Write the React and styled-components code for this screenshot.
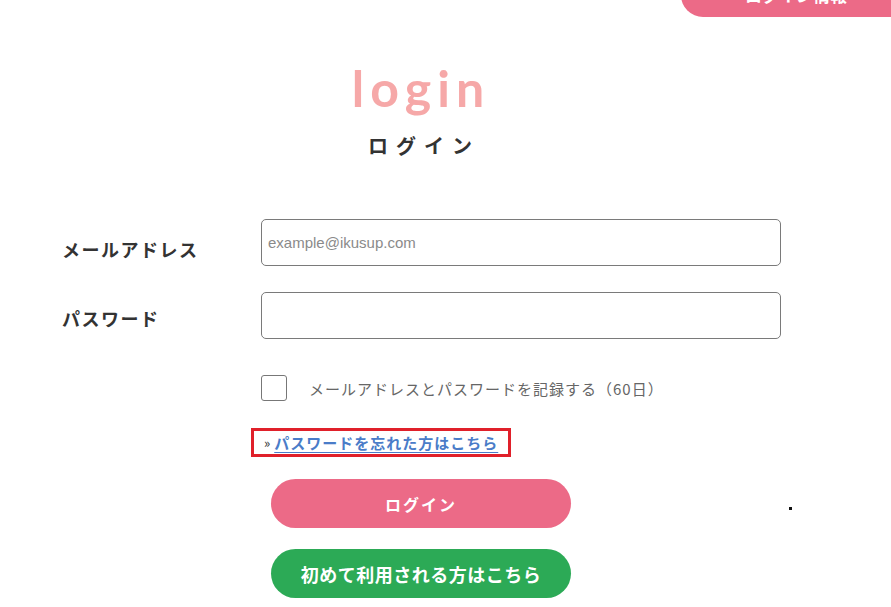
import React from "react";
import styled, { createGlobalStyle } from "styled-components";

const Global = createGlobalStyle`
  html, body { margin: 0; padding: 0; background: #fff; }
  body { font-family: "Noto Sans CJK JP", "Noto Sans", sans-serif; color: #333; overflow: hidden; }
  * { box-sizing: border-box; }
`;

const Header = styled.header`
  height: 17px;
  display: flex;
  justify-content: flex-end;
  overflow: hidden;
`;

const HeaderButton = styled.a`
  width: 230px;
  height: 50px;
  margin-top: -33px;
  margin-right: -20px;
  flex-shrink: 0;
  background: #ec6a87;
  border-radius: 22px;
  color: #fff;
  font-weight: 700;
  font-size: 17px;
  display: flex;
  align-items: flex-end;
  justify-content: center;
  padding-bottom: 14px;
  text-decoration: none;
  line-height: 1;
`;

const Main = styled.main`
  width: 760px;
  margin-left: 40px;
  display: flex;
  flex-direction: column;
  position: relative;
`;

const TitleBlock = styled.div`
  display: flex;
  flex-direction: column;
  align-items: center;
  margin-top: 46px;
`;

const EnTitle = styled.div`
  font-family: "Lato", sans-serif;
  font-weight: 700;
  font-size: 50px;
  letter-spacing: 6px;
  line-height: 1;
  color: #f6a8a8;
  padding-left: 2px;
`;

const JaTitle = styled.h1`
  margin: 23px 0 0;
  font-size: 20px;
  font-weight: 700;
  letter-spacing: 8px;
  line-height: 1;
  color: #333;
  padding-left: 8px;
`;

const Form = styled.form`
  display: flex;
  flex-direction: column;
  margin-top: 63px;
  padding-left: 22px;
`;

const Row = styled.div`
  display: grid;
  grid-template-columns: 199px 520px;
  align-items: center;
  margin-bottom: ${(p) => p.$gap || 0}px;
`;

const Label = styled.label`
  font-size: 18px;
  font-weight: 700;
  color: #333;
  letter-spacing: 1.5px;
  padding-top: ${(p) => p.$offset || 0}px;
`;

const Input = styled.input`
  width: 520px;
  height: 47px;
  border: 1px solid #7a7a7a;
  border-radius: 5px;
  padding: 0 6px;
  font-family: "Liberation Sans", Arial, sans-serif;
  font-size: 15px;
  color: #333;
  outline: none;
  &::placeholder { color: #8a8a8a; }
`;

const Options = styled.div`
  display: flex;
  flex-direction: column;
  margin-left: 199px;
`;

const CheckRow = styled.label`
  display: flex;
  align-items: center;
  margin-top: 36px;
  gap: 22px;
`;

const CheckBox = styled.span`
  width: 26px;
  height: 26px;
  border: 1px solid #777;
  border-radius: 3px;
  background: #fff;
`;

const CheckText = styled.span`
  font-size: 15px;
  color: #666;
  letter-spacing: 1px;
`;

const ForgotBox = styled.div`
  align-self: flex-start;
  margin-top: 27px;
  margin-left: -10px;
  width: 260px;
  height: 29px;
  border: 3px solid #e0202a;
  display: flex;
  align-items: center;
  padding-left: 10px;
  font-size: 15px;
  line-height: 1;
`;

const Raquo = styled.span`
  color: #333;
  font-size: 13px;
  margin-right: 4px;
`;

const ForgotLink = styled.a`
  color: #4a7cc8;
  font-weight: 700;
  text-decoration: underline;
  text-underline-offset: 3px;
  letter-spacing: 1px;
`;

const Buttons = styled.div`
  display: flex;
  flex-direction: column;
  align-items: center;
  gap: 21px;
  margin-top: 22px;
  margin-left: 10px;
  width: 300px;
`;

const PillButton = styled.button`
  width: 300px;
  height: 49px;
  border: none;
  border-radius: 25px;
  background: ${(p) => p.$bg};
  color: #fff;
  font-family: "Noto Sans CJK JP", sans-serif;
  font-weight: 700;
  font-size: ${(p) => p.$size}px;
  letter-spacing: ${(p) => p.$ls || 0}px;
  cursor: pointer;
`;

const Speck = styled.span`
  position: absolute;
  left: 749px;
  top: 490px;
  width: 3px;
  height: 3px;
  background: #111;
`;

export default function App() {
  return (
    <>
      <Global />
      <Header>
        <HeaderButton href="#">ログイン情報</HeaderButton>
      </Header>
      <Main>
        <TitleBlock>
          <EnTitle>login</EnTitle>
          <JaTitle>ログイン</JaTitle>
        </TitleBlock>
        <Form onSubmit={(e) => e.preventDefault()}>
          <Row $gap={26}>
            <Label $offset={12}>メールアドレス</Label>
            <Input type="email" placeholder="example@ikusup.com" />
          </Row>
          <Row>
            <Label $offset={4}>パスワード</Label>
            <Input type="password" />
          </Row>
          <Options>
            <CheckRow>
              <CheckBox />
              <CheckText>メールアドレスとパスワードを記録する（60日）</CheckText>
            </CheckRow>
            <ForgotBox>
              <Raquo>»</Raquo>
              <ForgotLink href="#">パスワードを忘れた方はこちら</ForgotLink>
            </ForgotBox>
            <Buttons>
              <PillButton $bg="#ec6a87" $size={16} $ls={2}>ログイン</PillButton>
              <PillButton $bg="#2caa56" $size={18} $ls={0.5}>初めて利用される方はこちら</PillButton>
            </Buttons>
          </Options>
        </Form>
        <Speck />
      </Main>
    </>
  );
}
